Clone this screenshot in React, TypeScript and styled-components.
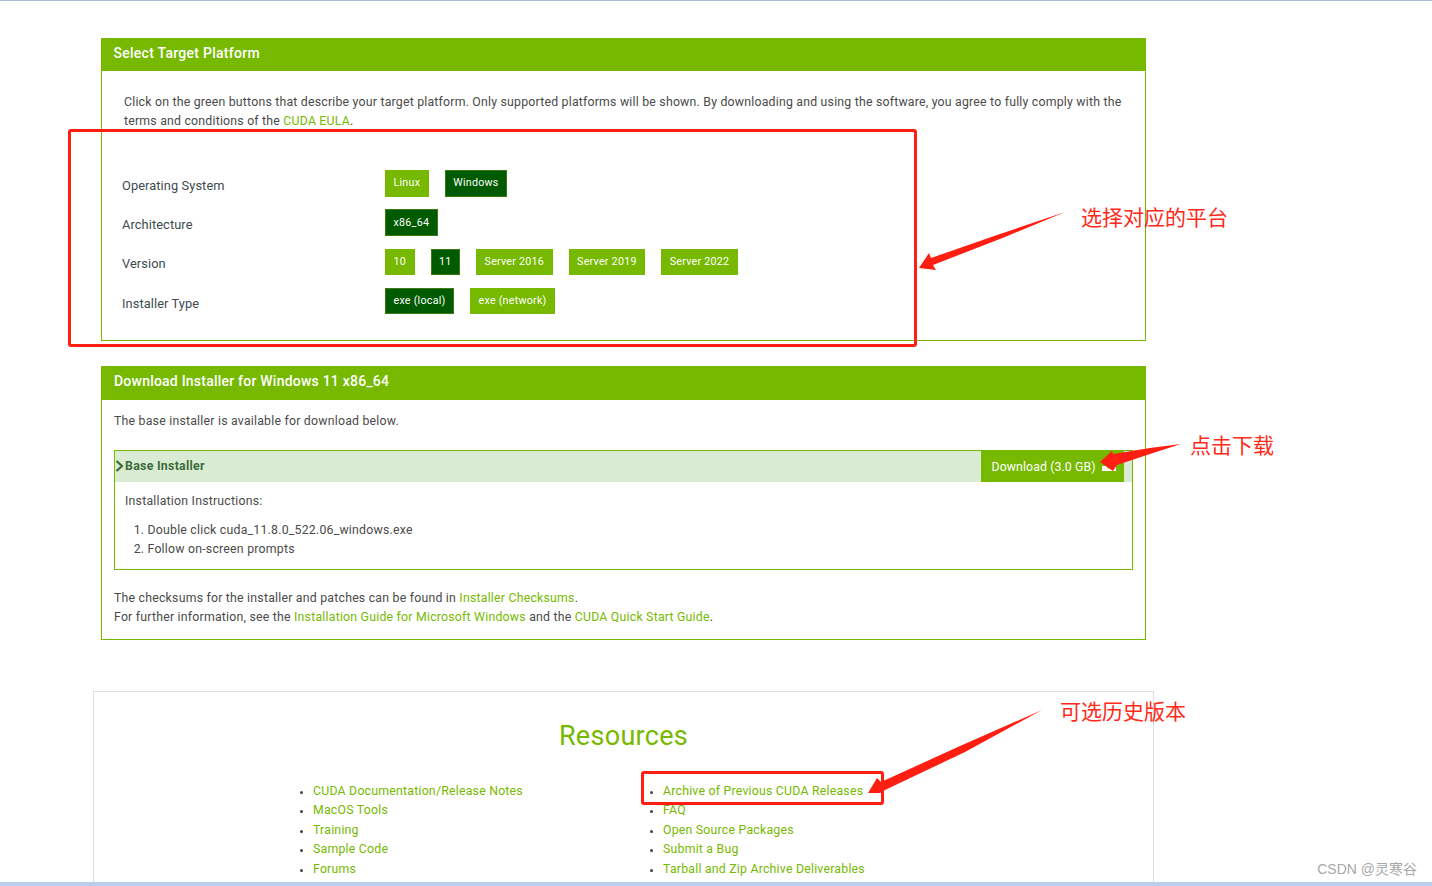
import React from "react";
import styled, { createGlobalStyle } from "styled-components";

const Global = createGlobalStyle`
  html, body { margin: 0; padding: 0; background: #fff; }
  body { font-family: Roboto, "Liberation Sans", sans-serif; color: #4a4a4a; }
`;
const GREEN = "#76b900";
const Page = styled.div`
  position: relative; width: 1432px; height: 886px; overflow: hidden; box-sizing: border-box;
  border-top: 1px solid #a9b8d4; padding: 37px 0 0 101px; background: #fff;
`;
const BottomBar = styled.div`
  position: absolute; left: 0; right: 0; bottom: 0; height: 4px; background: #bccfea;
`;
const Panel = styled.section<{ $h: number; $mb: number }>`
  width: 1045px; height: ${(p) => p.$h}px; box-sizing: border-box; border: 1px solid ${GREEN};
  margin-bottom: ${(p) => p.$mb}px; display: flex; flex-direction: column;
`;
const PanelHead = styled.h2<{ $h: number; $pl: number; $ls: number }>`
  margin: -1px -1px 0; height: ${(p) => p.$h}px; background: ${GREEN}; color: #fff;
  font-size: 14px; font-weight: 500; letter-spacing: ${(p) => p.$ls}px; line-height: 31px;
  padding-left: ${(p) => p.$pl}px;
`;
const Intro = styled.p`
  margin: 22px 20px 0 22px; font-size: 12.3px; line-height: 19px; letter-spacing: 0.21px;
`;
const A = styled.a`color: ${GREEN}; text-decoration: none;`;
const Form = styled.div`margin: 39px 0 0 20px;`;
const Row = styled.div`display: grid; grid-template-columns: 263px 1fr; height: 39.33px;`;
const Label = styled.div`font-size: 12.8px; line-height: 16px; padding-top: 7.6px; color: #3d4a50; letter-spacing: 0.1px;`;
const Btns = styled.div`display: flex; gap: 16px; align-items: flex-start;`;
const Btn = styled.button<{ $on?: boolean }>`
  height: 26.5px; box-sizing: border-box; padding: 0 7.5px 1px; font: 400 10.7px Roboto, sans-serif;
  letter-spacing: 0.25px; color: #fff; cursor: pointer;
  background: ${(p) => (p.$on ? "#005a00" : GREEN)};
  border: 1px solid ${(p) => (p.$on ? "#3f7a10" : GREEN)};
`;
const Body = styled.p`
  margin: 0; padding: 0 12px; font-size: 12.3px; line-height: 19px; letter-spacing: 0.22px;
`;
const FirstBody = styled(Body)`margin-top: 12px;`;
const Installer = styled.div`
  margin: 19px 12px 0; height: 120px; box-sizing: border-box; border: 1px solid ${GREEN};
`;
const InstHead = styled.div`
  height: 31px; background: #d9ebd3; display: flex; align-items: center; padding-right: 8px;
`;
const InstTitle = styled.div`
  flex: 1; display: flex; align-items: center; gap: 1px; font-size: 12.3px; font-weight: 700;
  color: #3a6b3a; letter-spacing: 0.3px; padding-bottom: 2px;
`;
const DlBtn = styled.a`
  width: 143px; height: 31px; box-sizing: border-box; background: ${GREEN}; color: #fff; display: flex;
  align-items: center; gap: 6px; padding-left: 10.5px; font-size: 12.3px; letter-spacing: 0.1px; padding-top: 1px;
`;
const InstBody = styled.div`padding: 10px 10px; font-size: 12.3px; line-height: 19px; letter-spacing: 0.22px;`;
const Steps = styled.ol`margin: 10px 0 0; padding-left: 22.5px;`;
const Notes = styled(Body)`margin-top: 19px;`;
const Resources = styled.section`
  margin-left: -8px; width: 1061px; height: 220px; box-sizing: border-box; border: 1px solid #ddd;
  padding-top: 28px;
`;
const ResTitle = styled.h2`
  margin: 0; text-align: center; color: ${GREEN}; font-size: 27px; font-weight: 400; line-height: 32px; letter-spacing: 0.3px;
`;
const Cols = styled.div`display: flex; padding: 30px 0 0 219px;`;
const Col = styled.ul`
  width: 350px; margin: 0; padding: 0; list-style: none; font-size: 12.3px; line-height: 19.4px; letter-spacing: 0.22px;
`;
const Item = styled.li`
  position: relative;
  &::before { content: ""; position: absolute; left: -13px; top: 9px; width: 3px; height: 3px; border-radius: 50%; background: #444; }
`;
const RedBox = styled.div<{ $x: number; $y: number; $w: number; $h: number }>`
  position: absolute; left: ${(p) => p.$x}px; top: ${(p) => p.$y}px; width: ${(p) => p.$w}px; height: ${(p) => p.$h}px;
  box-sizing: border-box; border: 3px solid #ff1f12; border-radius: 3px;
`;
const Note = styled.div<{ $x: number; $y: number }>`
  position: absolute; left: ${(p) => p.$x}px; top: ${(p) => p.$y}px; color: #ff2a1a; font-size: 21px; line-height: 28px; white-space: nowrap;
  font-family: "Noto Sans CJK SC", sans-serif; font-weight: 400;
`;
const Watermark = styled.div`
  position: absolute; right: 15px; bottom: 7px; color: #a8a8a8; font-size: 14px; line-height: 20px;
  font-family: "Liberation Sans", "Noto Sans CJK SC", sans-serif;
`;
const Overlay = styled.svg`position: absolute; left: 0; top: -1px; pointer-events: none;`;

export default function App() {
  return (
    <Page>
      <Global />
      <Panel $h={303} $mb={25}>
        <PanelHead $h={33} $pl={12.5} $ls={0.27}>Select Target Platform</PanelHead>
        <Intro>
          Click on the green buttons that describe your target platform. Only supported platforms will be shown. By downloading and using the software, you agree to fully comply with the terms and conditions of the <A>CUDA EULA</A>.
        </Intro>
        <Form>
          <Row><Label>Operating System</Label><Btns><Btn>Linux</Btn><Btn $on>Windows</Btn></Btns></Row>
          <Row><Label>Architecture</Label><Btns><Btn $on>x86_64</Btn></Btns></Row>
          <Row><Label>Version</Label><Btns><Btn>10</Btn><Btn $on>11</Btn><Btn>Server 2016</Btn><Btn>Server 2019</Btn><Btn>Server 2022</Btn></Btns></Row>
          <Row><Label>Installer Type</Label><Btns><Btn $on>exe (local)</Btn><Btn>exe (network)</Btn></Btns></Row>
        </Form>
      </Panel>
      <Panel $h={274} $mb={51}>
        <PanelHead $h={34} $pl={13} $ls={0.22}>Download Installer for Windows 11 x86_64</PanelHead>
        <FirstBody>The base installer is available for download below.</FirstBody>
        <Installer>
          <InstHead>
            <InstTitle>
              <svg width="9" height="12" viewBox="0 0 9 12"><path d="M1.5 1 L7 6 L1.5 11" fill="none" stroke="#3a6b3a" strokeWidth="2.2" /></svg>
              Base Installer
            </InstTitle>
            <DlBtn>
              Download (3.0 GB)
              <svg width="14" height="10" viewBox="0 0 14 10"><path d="M0 4 L4 4 L7 7 L10 4 L14 4 L14 9 L0 9 Z M5 1 L9 1 L9 3 L7 5 L5 3 Z" fill="#fff" /></svg>
            </DlBtn>
          </InstHead>
          <InstBody>
            Installation Instructions:
            <Steps>
              <li>Double click cuda_11.8.0_522.06_windows.exe</li>
              <li>Follow on-screen prompts</li>
            </Steps>
          </InstBody>
        </Installer>
        <Notes>
          The checksums for the installer and patches can be found in <A>Installer Checksums</A>.<br />
          For further information, see the <A>Installation Guide for Microsoft Windows</A> and the <A>CUDA Quick Start Guide</A>.
        </Notes>
      </Panel>
      <Resources>
        <ResTitle>Resources</ResTitle>
        <Cols>
          <Col>
            <Item><A>CUDA Documentation/Release Notes</A></Item>
            <Item><A>MacOS Tools</A></Item>
            <Item><A>Training</A></Item>
            <Item><A>Sample Code</A></Item>
            <Item><A>Forums</A></Item>
          </Col>
          <Col>
            <Item><A>Archive of Previous CUDA Releases</A></Item>
            <Item><A>FAQ</A></Item>
            <Item><A>Open Source Packages</A></Item>
            <Item><A>Submit a Bug</A></Item>
            <Item><A>Tarball and Zip Archive Deliverables</A></Item>
          </Col>
        </Cols>
      </Resources>
      <RedBox $x={68} $y={128} $w={849} $h={218} />
      <RedBox $x={641} $y={770} $w={243} $h={34} />
      <Overlay width="1432" height="886" viewBox="0 0 1432 886">
        <polygon fill="#ff1f12" points="919,268 929,253 931,258 1000,234 1065,212 1005,237 933,265 936,270" />
        <polygon fill="#ff1f12" points="1100,462 1112,451 1113,454 1150,448 1181,444 1150,454 1117,465 1113,471" />
        <polygon fill="#ff1f12" points="868,793 877,778 881,782 960,746 1042,710 965,752 885,790 880,793" />
      </Overlay>
      <Note $x={1081} $y={201}>选择对应的平台</Note>
      <Note $x={1190} $y={429}>点击下载</Note>
      <Note $x={1060} $y={695}>可选历史版本</Note>
      <Watermark>CSDN @灵寒谷</Watermark>
      <BottomBar />
    </Page>
  );
}
